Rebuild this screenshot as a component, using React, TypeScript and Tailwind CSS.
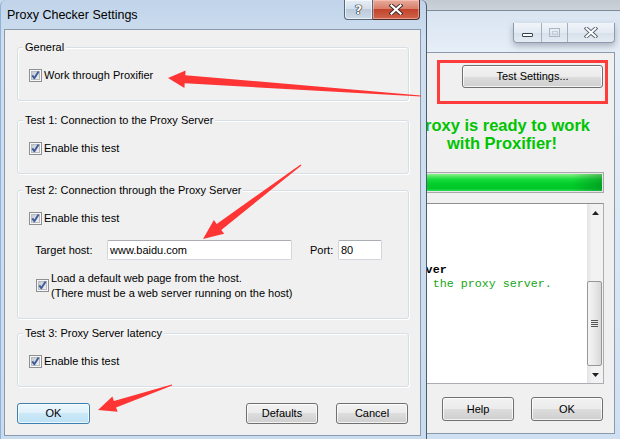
import React from "react";

function CheckBox() {
  return (
    <svg width="13" height="13" viewBox="0 0 13 13" className="shrink-0">
      <defs>
        <linearGradient id="cbg" x1="0" y1="0" x2="1" y2="1">
          <stop offset="0" stopColor="#c3c8cf" />
          <stop offset="1" stopColor="#f3f3f4" />
        </linearGradient>
      </defs>
      <rect x="0.5" y="0.5" width="12" height="12" fill="#f7f7f7" stroke="#8e8f8f" />
      <rect x="2.5" y="2.5" width="8" height="8" fill="url(#cbg)" stroke="#b7bcc3" />
      <path d="M3.3 6.4 L5.3 9.2 L9.6 2.6" fill="none" stroke="#3f5a97" strokeWidth="1.9" strokeLinejoin="round" />
    </svg>
  );
}

function Btn({
  children,
  w,
  h,
  focused,
  className = "",
}: {
  children: React.ReactNode;
  w: string;
  h: string;
  focused?: boolean;
  className?: string;
}) {
  const look = focused
    ? "border-[#3c7fb1] bg-[linear-gradient(#ecf7fd_0%,#dff1fb_50%,#cbe8f7_50%,#bce1f4_100%)]"
    : "border-[#707070] bg-[linear-gradient(#f2f2f2_0%,#ebebeb_50%,#dddddd_50%,#cfcfcf_100%)]";
  return (
    <div
      className={`flex items-center justify-center rounded-[3px] border shadow-[inset_0_0_0_1px_rgba(255,255,255,0.75)] ${look} ${w} ${h} ${className}`}
    >
      {children}
    </div>
  );
}

function Group({
  title,
  className,
  children,
}: {
  title: string;
  className: string;
  children: React.ReactNode;
}) {
  return (
    <div
      className={`ml-[12px] w-[392px] shrink-0 rounded-[3px] border border-[#d5dfe5] shadow-[inset_1px_1px_0_#ffffff,1px_1px_0_#ffffff] ${className}`}
    >
      <div className="-mt-[8px] ml-[5px] h-[14px] w-fit bg-[#f0f0f0] px-[2px] leading-[14px]">{title}</div>
      {children}
    </div>
  );
}

function CheckRow({ label }: { label: string }) {
  return (
    <div className="ml-[11px] mt-[14px] flex h-[15px] items-center gap-[2px]">
      <CheckBox />
      <span className="leading-[15px]">{label}</span>
    </div>
  );
}

function TextInput({ value, w }: { value: string; w: string }) {
  return (
    <div
      className={`flex h-[20px] items-center rounded-[2px] border border-[#d3d6dc] border-t-[#abadb3] bg-white pl-[2px] ${w}`}
    >
      {value}
    </div>
  );
}

function Arrows() {
  return (
    <svg width="620" height="439" viewBox="0 0 620 439" className="pointer-events-none absolute left-0 top-0">
      <polygon
        fill="#ff3434"
        points="168,78 185.6,70.5 185.3,75.2 421,95.4 421,96.6 184.7,83.2 184.4,87.9"
      />
      <polygon
        fill="#ff3434"
        points="203,239 213.9,220.1 216.7,223.9 300.6,164.5 301.4,165.5 221.3,229.9 224.1,233.7"
      />
      <polygon
        fill="#ff3434"
        points="98,410 112.4,396.6 113.9,400.9 171.8,384.4 172.2,385.6 116.1,407.5 117.6,411.8"
      />
    </svg>
  );
}

function Dialog() {
  return (
    <div className="absolute left-0 top-0 flex h-[439px] w-[427px] flex-col rounded-t-[6px] border-l border-r border-l-[#8fb2da] border-r-[#4b5b6e] bg-[linear-gradient(#c0d3e9,#cfdff0_40px,#c9dbef)]">
      <div className="flex h-[29px] shrink-0 justify-between">
        <div className="pl-[6px] pt-[7px] text-[12.5px] leading-[16px] text-black">Proxy Checker Settings</div>
        <div className="mr-[6px] flex h-[20px]">
          <div className="flex h-[20px] w-[29px] items-center justify-center rounded-bl-[4px] border border-t-0 border-[#56687c] bg-[linear-gradient(#e6eef6,#d3dfeb_45%,#bccbdc_50%,#cdd9e6)] shadow-[inset_0_0_0_1px_rgba(255,255,255,0.6)]">
            <span className="font-['DejaVu_Sans',sans-serif] text-[13px] font-bold leading-[13px] text-white [text-shadow:0_0_1px_#000,0_0_1px_#000,0_0_1px_#000]">
              ?
            </span>
          </div>
          <div className="flex h-[20px] w-[47px] items-center justify-center rounded-br-[4px] border border-l-0 border-t-0 border-[#4f2b27] bg-[linear-gradient(#e8ab9c,#d8806b_45%,#c2442d_50%,#d0654a)] shadow-[inset_0_0_0_1px_rgba(255,210,200,0.5)]">
            <svg width="14" height="11" viewBox="0 0 14 11">
              <path d="M2.5 1.5 L11.5 9.5 M11.5 1.5 L2.5 9.5" stroke="#3a2a2a" strokeWidth="4" strokeLinecap="square" />
              <path d="M2.5 1.5 L11.5 9.5 M11.5 1.5 L2.5 9.5" stroke="#ffffff" strokeWidth="2.2" strokeLinecap="square" />
            </svg>
          </div>
        </div>
      </div>
      <div className="ml-[3px] flex h-[407px] w-[417px] shrink-0 flex-col border border-[#8a99ab] bg-[#f0f0f0] pt-[17px]">
        <Group title="General" className="h-[54px]">
          <CheckRow label="Work through Proxifier" />
        </Group>
        <Group title="Test 1: Connection to the Proxy Server" className="mt-[19px] h-[54px]">
          <CheckRow label="Enable this test" />
        </Group>
        <Group title="Test 2: Connection through the Proxy Server" className="mt-[16px] h-[129px]">
          <CheckRow label="Enable this test" />
          <div className="ml-[17px] mt-[14px] flex h-[20px] items-center">
            <span className="w-[72px]">Target host:</span>
            <TextInput value="www.baidu.com" w="w-[185px]" />
            <span className="ml-[18px] w-[28px]">Port:</span>
            <TextInput value="80" w="w-[44px]" />
          </div>
          <div className="ml-[18px] mt-[11px] flex items-start">
            <div className="mt-[8px]">
              <CheckBox />
            </div>
            <div className="ml-[2px] leading-[15px]">
              Load a default web page from the host.
              <br />
              (There must be a web server running on the host)
            </div>
          </div>
        </Group>
        <Group title="Test 3: Proxy Server latency" className="mt-[14px] h-[54px]">
          <CheckRow label="Enable this test" />
        </Group>
        <div className="mt-[16px] flex">
          <Btn w="w-[73px]" h="h-[21px]" focused className="ml-[12px]">
            OK
          </Btn>
          <Btn w="w-[72px]" h="h-[21px]" className="ml-auto">
            Defaults
          </Btn>
          <Btn w="w-[72px]" h="h-[21px]" className="ml-[18px] mr-[12px]">
            Cancel
          </Btn>
        </div>
      </div>
    </div>
  );
}

function MainWindow() {
  const lines: { t: string; c: string }[] = [
    { t: "Testing Started...", c: "text-black" },
    { t: "Proxy Server", c: "text-black" },
    { t: "Address: 127.0.0.1:8080", c: "text-black" },
    { t: "Protocol: HTTPS", c: "text-black" },
    { t: "Starting: Test 1: Connection to the Proxy Server", c: "text-black font-bold" },
    { t: "[PASS] Connection established successfully to the proxy server.", c: "text-[#16a616]" },
  ];
  return (
    <div className="absolute left-[380px] top-0 flex h-[439px] w-[240px] flex-col">
      <div className="h-[10px] shrink-0 bg-[linear-gradient(#c3c9d0,#ccd2d9)]" />
      <div className="flex flex-1 flex-col border-t border-t-[#7f8a97] bg-[linear-gradient(#d9e4f1,#e6eef7_40px,#cfe0f2)]">
        <div className="flex h-[41px] shrink-0 justify-end pr-[5px] pt-[12px]">
          <div className="flex h-[20px] rounded-b-[4px] border border-t-0 border-[#8c9aab] bg-[linear-gradient(#f1f5fa,#e3eaf2_50%,#d7e0ea_50%,#e4ebf3)] shadow-[0_3px_6px_rgba(60,70,90,0.35)]">
            <div className="flex w-[28px] items-end justify-center border-r border-[#a3b0bf] pb-[5px]">
              <div className="h-[4px] w-[11px] rounded-[1px] border border-[#33404f] bg-white" />
            </div>
            <div className="flex w-[26px] items-center justify-center border-r border-[#a3b0bf]">
              <div className="flex h-[9px] w-[11px] items-center justify-center border border-[#aab6c4]">
                <div className="h-[4px] w-[6px] border border-[#c2ccd7]" />
              </div>
            </div>
            <div className="flex w-[46px] items-center justify-center">
              <svg width="14" height="11" viewBox="0 0 14 11">
                <path d="M2.5 1.5 L11.5 9.5 M11.5 1.5 L2.5 9.5" stroke="#56606c" strokeWidth="3.8" strokeLinecap="square" />
                <path d="M2.5 1.5 L11.5 9.5 M11.5 1.5 L2.5 9.5" stroke="#ffffff" strokeWidth="2" strokeLinecap="square" />
              </svg>
            </div>
          </div>
        </div>
        <div className="ml-[8px] flex h-[382px] w-[227px] shrink-0 flex-col border border-[#8c99a8] bg-[#f0f0f0] pl-[11px] pr-[10px]">
          <Btn w="w-[141px]" h="h-[23px]" className="mr-[1px] mt-[12px] self-end">
            Test Settings...
          </Btn>
          <div className="mt-[28px] text-center font-['Liberation_Sans',Arial,sans-serif] text-[16.5px] font-bold leading-[18px] text-[#00c400]">
            Proxy is ready to work
            <br />
            with Proxifier!
          </div>
          <div className="mt-[20px] h-[21px] shrink-0 border border-[#a8a8a8] bg-[#e6e6e6] p-[1px]">
            <div className="h-full w-full bg-[linear-gradient(90deg,rgba(0,0,0,0)_85%,rgba(0,90,20,0.35)),linear-gradient(#8af08a,#19dc3c_30%,#00cc2a_60%,#00c828_85%,#2fd957)]" />
          </div>
          <div className="mt-[10px] flex h-[181px] shrink-0 border border-[#abadb3] border-t-[#8e8f8f] bg-white">
            <div className="flex-1 overflow-hidden pt-[3px]">
              <div className="-ml-[291px] whitespace-pre font-['Liberation_Mono','Courier_New',monospace] text-[11.7px] leading-[14px]">
                {lines.map((l, i) => (
                  <div key={i} className={l.c}>
                    {l.t}
                  </div>
                ))}
              </div>
            </div>
            <div className="flex w-[16px] flex-col bg-[linear-gradient(90deg,#e3e3e3,#f2f2f2_30%,#f2f2f2)]">
              <div className="flex h-[17px] items-center justify-center">
                <svg width="7" height="4" viewBox="0 0 7 4">
                  <path d="M0 4 L3.5 0 L7 4 Z" fill="#222" />
                </svg>
              </div>
              <div className="flex-1">
                <div className="mt-[60px] flex h-[85px] w-[15px] items-center justify-center rounded-[2px] border border-[#979797] bg-[linear-gradient(90deg,#f4f4f4,#e9e9e9_50%,#d8d8d8)]">
                  <div className="flex flex-col gap-[1px]">
                    <div className="h-[1px] w-[7px] bg-[#555]" />
                    <div className="h-[1px] w-[7px] bg-[#555]" />
                    <div className="h-[1px] w-[7px] bg-[#555]" />
                    <div className="h-[1px] w-[7px] bg-[#555]" />
                  </div>
                </div>
              </div>
              <div className="flex h-[17px] items-center justify-center">
                <svg width="7" height="4" viewBox="0 0 7 4">
                  <path d="M0 0 L7 0 L3.5 4 Z" fill="#222" />
                </svg>
              </div>
            </div>
          </div>
          <div className="mr-[1px] mt-[13px] flex justify-end gap-[17px]">
            <Btn w="w-[72px]" h="h-[24px]">
              Help
            </Btn>
            <Btn w="w-[72px]" h="h-[24px]">
              OK
            </Btn>
          </div>
        </div>
      </div>
    </div>
  );
}

export default function App() {
  return (
    <div className="relative h-[439px] w-[620px] overflow-hidden bg-[#cbd9e8] font-['Liberation_Sans',Arial,sans-serif] text-[11px] text-black">
      <MainWindow />
      <Dialog />
      <div className="pointer-events-none absolute left-[437px] top-[60px] h-[44px] w-[171px] border-[3px] border-[#ff3b3b]" />
      <Arrows />
    </div>
  );
}
